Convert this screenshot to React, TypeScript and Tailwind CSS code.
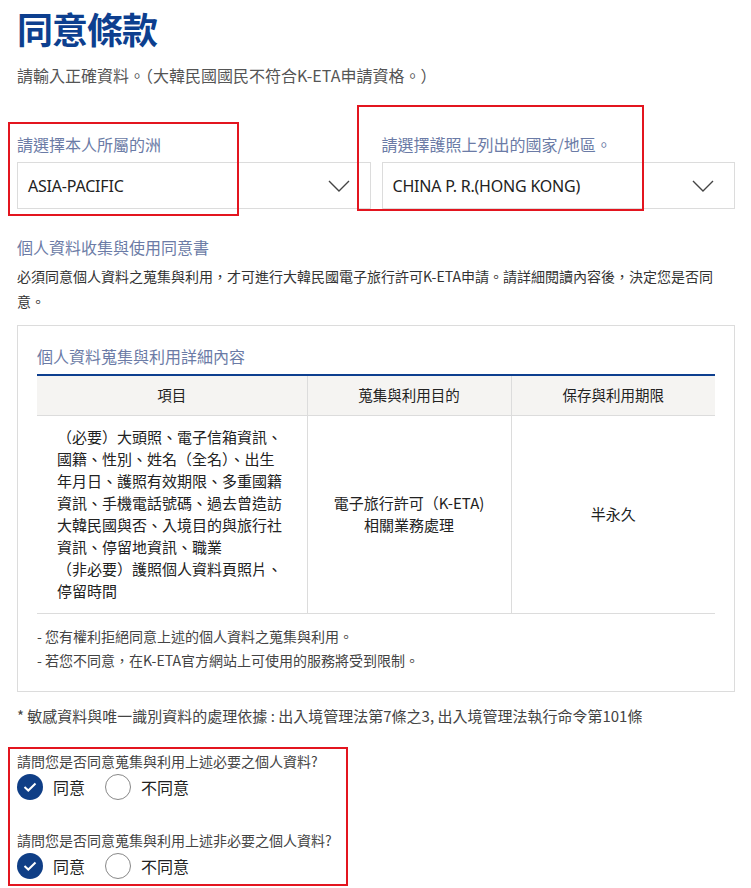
import React from 'react';

// ─── Small pieces ─────────────────────────────────────────────────────────────

const Chevron: React.FC = () => (
  <svg width="22" height="12" viewBox="0 0 22 12" fill="none" className="shrink-0">
    <path d="M1 1 L11 11 L21 1" stroke="#444" strokeWidth="1.4" />
  </svg>
);

const SelectBox: React.FC<{ label: string; value: string }> = ({ label, value }) => (
  <div className="flex-1 min-w-0">
    <p className="text-[16px] leading-[22px] text-[#6b7ba6] mt-[-1px]">{label}</p>
    <div className="mt-[7px] h-[47px] border border-[#dcdcdc] flex items-center justify-between pl-[10px] pr-[20px]">
      <span className="font-['Noto_Sans','Noto_Sans_CJK_TC',sans-serif] text-[16px] text-[#222] tracking-[-0.2px]">{value}</span>
      <Chevron />
    </div>
  </div>
);

const Radio: React.FC<{ checked?: boolean; label: string }> = ({ checked, label }) => (
  <div className="flex items-center gap-[10px]">
    {checked ? (
      <span className="w-[26px] h-[26px] rounded-full bg-[#0f3e86] flex items-center justify-center">
        <svg width="14" height="10" viewBox="0 0 14 10" fill="none">
          <path d="M1.5 5 L5.3 8.5 L12.5 1.5" stroke="white" strokeWidth="2" />
        </svg>
      </span>
    ) : (
      <span className="w-[26px] h-[26px] rounded-full border border-[#888] bg-white" />
    )}
    <span className="text-[16px] leading-[26px] text-[#222]">{label}</span>
  </div>
);

const Question: React.FC<{ text: string }> = ({ text }) => (
  <div>
    <p className="text-[14px] leading-[20px] text-[#444]">{text}</p>
    <div className="mt-[3px] flex items-center gap-[20px]">
      <Radio checked label="同意" />
      <Radio label="不同意" />
    </div>
  </div>
);

// ─── Page ─────────────────────────────────────────────────────────────────────

export default function App() {
  return (
    <div className="relative w-[751px] h-[888px] overflow-hidden bg-white pl-[17px] pr-[16px] font-['Noto_Sans_CJK_TC','Noto_Sans',sans-serif]">
      {/* Title */}
      <h1 className="pt-[6px] text-[36px] leading-[44px] font-bold text-[#0d3f8f] tracking-[-1px]">同意條款</h1>
      <p className="mt-[14px] text-[16px] leading-[22px] text-[#555]">
        請輸入正確資料。（大韓民國國民不符合K-ETA申請資格。）
      </p>

      {/* Selects */}
      <div className="mt-[48px] flex gap-[11px]">
        <SelectBox label="請選擇本人所屬的洲" value="ASIA-PACIFIC" />
        <SelectBox label="請選擇護照上列出的國家/地區。" value="CHINA P. R.(HONG KONG)" />
      </div>

      {/* Consent */}
      <h2 className="mt-[27px] text-[16px] leading-[22px] text-[#6b7ba6]">個人資料收集與使用同意書</h2>
      <p className="mt-[6px] text-[14px] leading-[25px] text-[#333]">
        必須同意個人資料之蒐集與利用，才可進行大韓民國電子旅行許可K-ETA申請。請詳細閱讀內容後，決定您是否同意。
      </p>

      <div className="mt-[11px] border border-[#dcdcdc] px-[19px] pt-[19px] pb-[19px]">
        <h3 className="text-[16px] leading-[22px] text-[#6b7ba6]">個人資料蒐集與利用詳細內容</h3>

        <table className="mt-[7px] w-full border-collapse border-t-2 border-t-[#0d3f8f] table-fixed text-[14.5px] text-[#222]">
          <colgroup>
            <col className="w-[270px]" />
            <col className="w-[204px]" />
            <col className="w-[204px]" />
          </colgroup>
          <thead>
            <tr className="bg-[#f5f4f2] h-[40px] border-b border-[#dcdcdc]">
              <th className="font-normal">項目</th>
              <th className="font-normal border-l border-[#dcdcdc]">蒐集與利用目的</th>
              <th className="font-normal border-l border-[#dcdcdc]">保存與利用期限</th>
            </tr>
          </thead>
          <tbody>
            <tr className="border-b border-[#dcdcdc]">
              <td className="pl-[20px] pr-[22px] pt-[10px] pb-[11px] text-[15px] leading-[22px] align-middle">
                （必要）大頭照、電子信箱資訊、國籍、性別、姓名（全名）、出生年月日、護照有效期限、多重國籍資訊、手機電話號碼、過去曾造訪大韓民國與否、入境目的與旅行社資訊、停留地資訊、職業
                <br />
                （非必要）護照個人資料頁照片、停留時間
              </td>
              <td className="border-l border-[#dcdcdc] text-center text-[15px] leading-[22px] align-middle">
                電子旅行許可（K-ETA)
                <br />
                相關業務處理
              </td>
              <td className="border-l border-[#dcdcdc] text-center text-[15px] leading-[22px] align-middle">半永久</td>
            </tr>
          </tbody>
        </table>

        <ul className="mt-[10px] text-[14px] leading-[24px] text-[#444]">
          <li>- 您有權利拒絕同意上述的個人資料之蒐集與利用。</li>
          <li>- 若您不同意，在K-ETA官方網站上可使用的服務將受到限制。</li>
        </ul>
      </div>

      <p className="mt-[13px] text-[15px] leading-[22px] text-[#444]">
        * 敏感資料與唯一識別資料的處理依據 : 出入境管理法第7條之3, 出入境管理法執行命令第101條
      </p>

      {/* Agreement questions */}
      <div className="mt-[24px] flex flex-col gap-[30px]">
        <Question text="請問您是否同意蒐集與利用上述必要之個人資料?" />
        <Question text="請問您是否同意蒐集與利用上述非必要之個人資料?" />
      </div>

      {/* Red annotation boxes */}
      <div className="absolute left-[8px] top-[122px] w-[231px] h-[94px] border-2 border-[#e3151f] pointer-events-none" />
      <div className="absolute left-[357px] top-[105px] w-[287px] h-[106px] border-2 border-[#e3151f] pointer-events-none" />
      <div className="absolute left-[8px] top-[747px] w-[340px] h-[139px] border-2 border-[#e3151f] pointer-events-none" />
    </div>
  );
}
